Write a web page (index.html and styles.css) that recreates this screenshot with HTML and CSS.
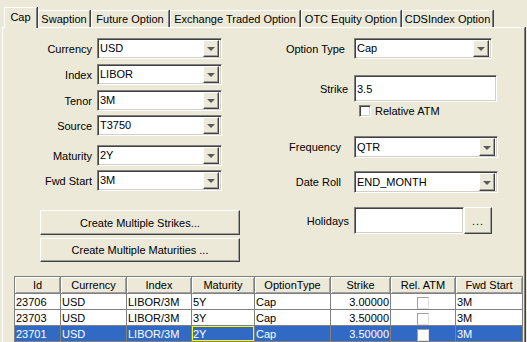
FILE: index.html
```html
<!DOCTYPE html>
<html>
<head>
<meta charset="utf-8">
<link rel="stylesheet" href="styles.css">
</head>
<body>
<div class="tabs">
  <div class="tab sel w-cap">Cap</div>
  <div class="tab w-swp">Swaption</div>
  <div class="tab w-fut">Future Option</div>
  <div class="tab w-exc">Exchange Traded Option</div>
  <div class="tab w-otc">OTC Equity Option</div>
  <div class="tab w-cds">CDSIndex Option</div>
</div>
<div class="panel">
  <div class="form">
    <div class="col-left">
      <div class="row r1"><span class="lbl">Currency</span><div class="combo"><span class="val">USD</span><span class="drop"><i></i></span></div></div>
      <div class="row r2"><span class="lbl">Index</span><div class="combo"><span class="val">LIBOR</span><span class="drop"><i></i></span></div></div>
      <div class="row r3"><span class="lbl">Tenor</span><div class="combo"><span class="val">3M</span><span class="drop"><i></i></span></div></div>
      <div class="row r4"><span class="lbl">Source</span><div class="combo"><span class="val">T3750</span><span class="drop"><i></i></span></div></div>
      <div class="row r5"><span class="lbl">Maturity</span><div class="combo"><span class="val">2Y</span><span class="drop"><i></i></span></div></div>
      <div class="row r6"><span class="lbl">Fwd Start</span><div class="combo"><span class="val">3M</span><span class="drop"><i></i></span></div></div>
      <div class="btn b1">Create Multiple Strikes...</div>
      <div class="btn b2">Create Multiple Maturities ...</div>
    </div>
    <div class="col-right">
      <div class="rrow q1"><span class="rlbl p-opt">Option Type</span><div class="combo c-opt"><span class="val">Cap</span><span class="drop"><i></i></span></div></div>
      <div class="rrow q2"><span class="rlbl p-str">Strike</span><div class="input i-str"><span class="val">3.5</span></div></div>
      <div class="chkrow"><span class="chk"></span><span>Relative ATM</span></div>
      <div class="rrow q3"><span class="rlbl p-frq">Frequency</span><div class="combo c-wide"><span class="val">QTR</span><span class="drop"><i></i></span></div></div>
      <div class="rrow q4"><span class="rlbl p-frq">Date Roll</span><div class="combo c-wide"><span class="val">END_MONTH</span><span class="drop"><i></i></span></div></div>
      <div class="rrow q5"><span class="rlbl p-hol">Holidays</span><div class="input i-hol"></div><div class="dots">...</div></div>
    </div>
  </div>
  <table class="grid">
    <thead>
      <tr><th class="k1">Id</th><th class="k2">Currency</th><th class="k3">Index</th><th class="k4">Maturity</th><th class="k5">OptionType</th><th class="k6">Strike</th><th class="k7">Rel. ATM</th><th class="k8">Fwd Start</th></tr>
    </thead>
    <tbody>
      <tr><td>23706</td><td>USD</td><td>LIBOR/3M</td><td>5Y</td><td>Cap</td><td class="num">3.00000</td><td class="ctr"><span class="tchk"></span></td><td>3M</td></tr>
      <tr><td>23703</td><td>USD</td><td>LIBOR/3M</td><td>3Y</td><td>Cap</td><td class="num">3.50000</td><td class="ctr"><span class="tchk"></span></td><td>3M</td></tr>
      <tr class="selrow"><td>23701</td><td>USD</td><td>LIBOR/3M</td><td class="focus">2Y</td><td>Cap</td><td class="num">3.50000</td><td class="ctr"><span class="tchk"></span></td><td>3M</td></tr>
    </tbody>
  </table>
</div>
</body>
</html>
```
FILE: styles.css
```css
html, body {
  margin: 0;
  padding: 0;
  background: #ECE9D8;
  font-family: "Liberation Sans", Arial, sans-serif;
  font-size: 11px;
  color: #000;
  overflow: hidden;
}

.tabs {
  display: flex;
  align-items: flex-end;
  height: 27px;
  padding-left: 4px;
  position: relative;
  z-index: 2;
}
.tab {
  box-sizing: border-box;
  height: 17px;
  border-top: 1px solid #fff;
  border-left: 1px solid #fff;
  border-right: 1px solid #808080;
  box-shadow: 1px 0 0 #404040;
  text-align: center;
  line-height: 15px;
  padding-top: 1px;
  white-space: nowrap;
}
.tab.sel {
  height: 21px;
  margin-bottom: -1px;
  background: #ECE9D8;
  line-height: 17px;
}
.w-cap { width: 33px; }
.w-swp { width: 52px; margin-left: 1px; }
.w-fut { width: 78px; margin-left: 1px; }
.w-exc { width: 130px; margin-left: 1px; }
.w-otc { width: 100px; margin-left: 1px; }
.w-cds { width: 91px; margin-left: 1px; }

.panel {
  box-sizing: border-box;
  margin-left: 2px;
  margin-right: 2px;
  border-top: 1px solid #fff;
  border-left: 1px solid #fff;
  border-right: 1px solid #808080;
  box-shadow: 1px 0 0 #404040;
  height: 315px;
  padding-top: 10px;
}

.form {
  display: flex;
}
.col-left {
  width: 219px;
  display: flex;
  flex-direction: column;
}
.row {
  display: flex;
  align-items: center;
  height: 21px;
}
.r2, .r3 { margin-top: 5px; }
.r4 { margin-top: 4px; }
.r5 { margin-top: 9px; }
.r6 { margin-top: 4px; }
.lbl {
  width: 89px;
  text-align: right;
  margin-right: 5px;
}

.combo {
  box-sizing: border-box;
  width: 125px;
  height: 21px;
  background: #fff;
  border-top: 1px solid #808080;
  border-left: 1px solid #808080;
  border-right: 1px solid #fff;
  border-bottom: 1px solid #fff;
  box-shadow: inset 1px 1px 0 #404040, inset -1px -1px 0 #D4D0C8;
  display: flex;
  align-items: center;
  padding: 2px;
}
.combo .val {
  flex: 1;
  padding-left: 0;
  line-height: 15px;
}
.drop {
  box-sizing: border-box;
  width: 16px;
  height: 17px;
  background: #ECE9D8;
  border-top: 1px solid #fff;
  border-left: 1px solid #fff;
  border-right: 1px solid #404040;
  border-bottom: 1px solid #404040;
  box-shadow: inset -1px -1px 0 #A0A0A0;
  display: flex;
  align-items: center;
  justify-content: center;
}
.drop i {
  width: 0;
  height: 0;
  border-left: 4px solid transparent;
  border-right: 4px solid transparent;
  border-top: 4px solid #5a5a5a;
  margin-top: 1px;
}

.btn {
  box-sizing: border-box;
  margin-left: 37px;
  width: 200px;
  border-top: 1px solid #fff;
  border-left: 1px solid #fff;
  border-right: 1px solid #404040;
  border-bottom: 1px solid #404040;
  box-shadow: inset -1px -1px 0 #A0A0A0;
  display: flex;
  align-items: center;
  justify-content: center;
}
.b1 { margin-top: 19px; height: 25px; }
.b2 { margin-top: 3px; height: 24px; }

.col-right {
  margin-left: 38px;
  display: flex;
  flex-direction: column;
}
.rrow {
  display: flex;
  align-items: center;
}
.rlbl {
  box-sizing: border-box;
  width: 94px;
  text-align: right;
}
.p-opt { padding-right: 9px; }
.p-str { padding-right: 6px; }
.p-frq { padding-right: 13px; }
.p-hol { padding-right: 5px; }

.c-opt { width: 138px; }
.c-wide { width: 144px; height: 22px; }
.c-wide .drop { height: 18px; }

.q2 { margin-top: 16px; }
.q3 { margin-top: 19px; }
.q4 { margin-top: 13px; }
.q5 { margin-top: 14px; }

.input {
  box-sizing: border-box;
  height: 27px;
  background: #fff;
  border-top: 1px solid #808080;
  border-left: 1px solid #808080;
  border-right: 1px solid #fff;
  border-bottom: 1px solid #fff;
  box-shadow: inset 1px 1px 0 #404040, inset -1px -1px 0 #D4D0C8;
  display: flex;
  align-items: center;
  padding-left: 2px;
}
.i-str { width: 143px; }
.i-hol { width: 110px; }
.dots {
  box-sizing: border-box;
  width: 28px;
  height: 27px;
  border-top: 1px solid #fff;
  border-left: 1px solid #fff;
  border-right: 1px solid #404040;
  border-bottom: 1px solid #404040;
  box-shadow: inset -1px -1px 0 #A0A0A0;
  display: flex;
  align-items: center;
  justify-content: center;
  letter-spacing: 1px;
}

.chkrow {
  display: flex;
  align-items: center;
  height: 13px;
  margin-top: 2px;
  padding-left: 99px;
}
.chk {
  box-sizing: border-box;
  width: 12px;
  height: 12px;
  background: #fff;
  border-top: 1px solid #808080;
  border-left: 1px solid #808080;
  border-right: 1px solid #fff;
  border-bottom: 1px solid #fff;
  box-shadow: inset 1px 1px 0 #404040, inset -1px -1px 0 #D4D0C8;
  margin-right: 4px;
}

.grid {
  margin-top: 14px;
  margin-left: 11px;
  border-collapse: collapse;
  table-layout: fixed;
  width: 507px;
  border: 1px solid #808080;
}
.grid th, .grid td {
  padding: 0 1px;
  border: 1px solid #808080;
  white-space: nowrap;
  overflow: hidden;
  font-weight: normal;
}
.grid th {
  height: 16px;
  background: #ECE9D8;
  text-align: center;
  box-shadow: inset 1px 1px 0 #fff, inset -1px -1px 0 #A0A0A0;
}
.grid td {
  height: 15px;
  line-height: 14px;
  background: #fff;
}
.k1 { width: 43px; }
.k2 { width: 63px; }
.k3 { width: 62px; }
.k4 { width: 60px; }
.k5 { width: 73px; }
.k6 { width: 57px; }
.k7 { width: 62px; }
.k8 { width: 64px; }
.grid td.num { text-align: right; }
.grid td.ctr { text-align: center; }
.tchk {
  display: inline-block;
  box-sizing: border-box;
  width: 12px;
  height: 12px;
  vertical-align: middle;
  background: #fff;
  border-top: 1px solid #A0A0A0;
  border-left: 1px solid #A0A0A0;
  border-right: 1px solid #E0E0E0;
  border-bottom: 1px solid #E0E0E0;
}
.selrow td {
  background: #316AC5;
  color: #fff;
}
.selrow td.focus {
  box-shadow: inset 0 0 0 1px #FFFF00;
}
```
